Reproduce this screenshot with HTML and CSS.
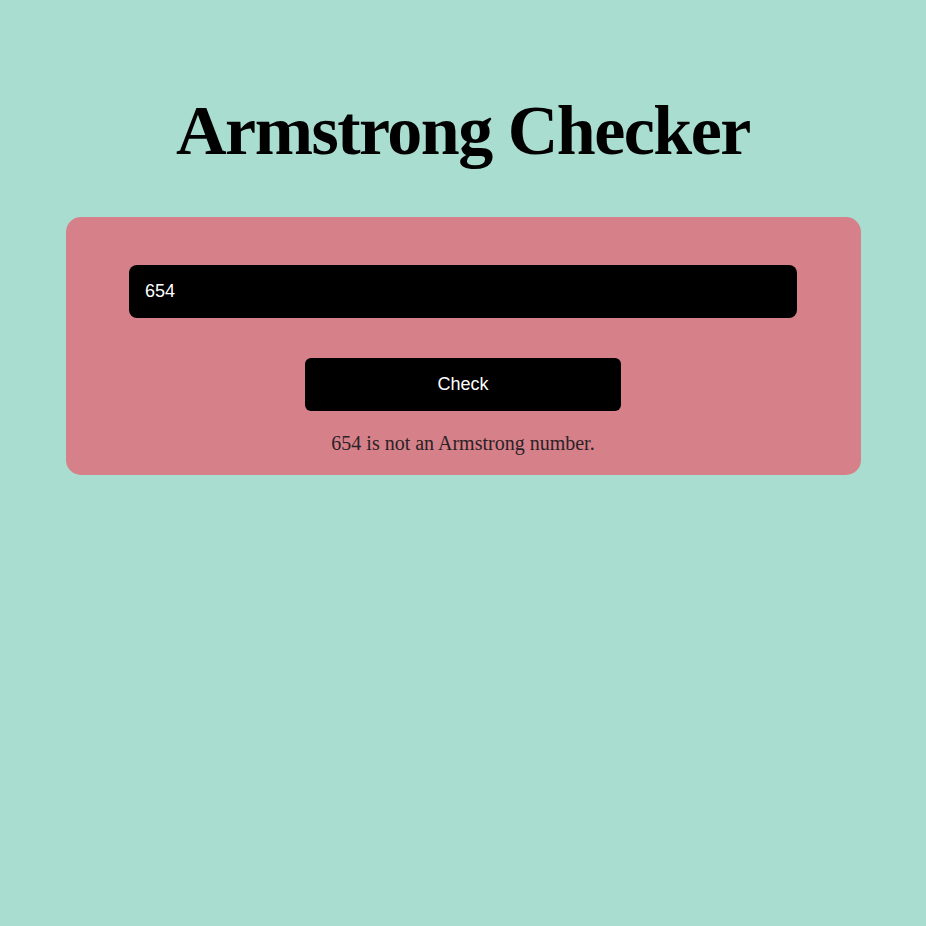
FILE: index.html
```html
<!DOCTYPE html>
<html>
<head>
<meta charset="utf-8">
<link rel="stylesheet" href="styles.css">
</head>
<body>
<h1 class="title">Armstrong Checker</h1>
<div class="card">
  <input class="num" type="text" value="654">
  <button class="btn">Check</button>
  <p class="result">654 is not an Armstrong number.</p>
</div>
</body>
</html>
```
FILE: styles.css
```css
html, body {
  margin: 0;
  padding: 0;
  background: #a8ddd0;
  font-family: "Liberation Serif", "Times New Roman", serif;
}
body {
  display: flex;
  flex-direction: column;
  align-items: center;
  min-height: 926px;
}
.title {
  margin: 91px 0 0 0;
  font-size: 70px;
  line-height: 80px;
  letter-spacing: -1.5px;
  font-weight: bold;
  color: #000;
}
.card {
  margin-top: 46px;
  width: 795px;
  box-sizing: border-box;
  padding: 48px 64px 20px;
  background: #d6808a;
  border-radius: 15px;
  display: flex;
  flex-direction: column;
  align-items: center;
}
.num {
  width: 668px;
  height: 53px;
  box-sizing: border-box;
  border: none;
  border-radius: 8px;
  background: #000;
  color: #fff;
  padding: 0 16px;
  font-family: "Liberation Sans", Arial, sans-serif;
  font-size: 18px;
  outline: none;
}
.btn {
  margin-top: 40px;
  width: 316px;
  height: 53px;
  border: none;
  border-radius: 6px;
  background: #000;
  color: #fff;
  font-family: "Liberation Sans", Arial, sans-serif;
  font-size: 18px;
}
.result {
  margin: 20px 0 0 0;
  font-size: 20px;
  line-height: 24px;
  color: #2a2226;
}
```
